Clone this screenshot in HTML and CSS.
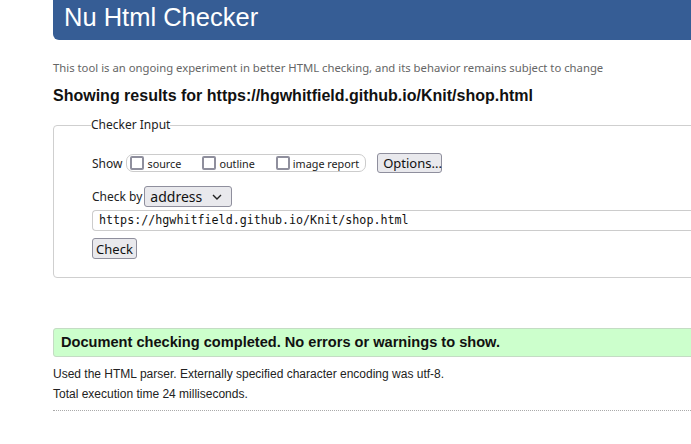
FILE: index.html
```html
<!DOCTYPE html>
<html lang="en">
<head>
<meta charset="utf-8">
<title>Nu Html Checker</title>
<link rel="stylesheet" href="styles.css">
</head>
<body>
<div class="page">
  <h1 class="banner">Nu Html Checker</h1>
  <p class="tagline">This tool is an ongoing experiment in better HTML checking, and its behavior remains subject to change</p>
  <h2 class="results-title">Showing results for https://hgwhitfield.github.io/Knit/shop.html</h2>
  <form class="checker">
    <fieldset class="checker-set">
      <legend class="checker-legend">Checker Input</legend>
      <div class="row show-row">
        <span class="label">Show</span>
        <span class="show-group">
          <label class="opt"><input type="checkbox" class="cb"><span>source</span></label>
          <label class="opt"><input type="checkbox" class="cb"><span>outline</span></label>
          <label class="opt"><input type="checkbox" class="cb"><span>image report</span></label>
        </span>
        <button type="button" class="btn options-btn">Options...</button>
      </div>
      <div class="row checkby-row">
        <span class="label">Check by</span>
        <span class="select">address<svg class="chev" width="10" height="6" viewBox="0 0 10 6"><path d="M1 1 L5 5 L9 1" fill="none" stroke="#222" stroke-width="1.4"/></svg></span>
      </div>
      <div class="url-input">https://hgwhitfield.github.io/Knit/shop.html</div>
      <div class="row">
        <button type="button" class="btn check-btn">Check</button>
      </div>
    </fieldset>
  </form>
  <div class="success">Document checking completed. No errors or warnings to show.</div>
  <p class="info">Used the HTML parser. Externally specified character encoding was utf-8.</p>
  <p class="info">Total execution time 24 milliseconds.</p>
  <hr class="dotted">
</div>
</body>
</html>
```
FILE: styles.css
```css
html, body {
  margin: 0;
  padding: 0;
  background: #fff;
  overflow: hidden;
}
body {
  font-family: "Liberation Sans", Arial, sans-serif;
  color: #222;
}
.page {
  margin-left: 53px;
  width: 760px;
  display: flex;
  flex-direction: column;
}
.banner {
  margin: 0;
  height: 40px;
  background: #365d95;
  color: #fff;
  font-family: "Liberation Sans", Arial, sans-serif;
  font-weight: normal;
  font-size: 25.5px;
  line-height: 34px;
  padding-left: 11px;
  border-radius: 0 0 0 6px;
}
.tagline {
  margin: 20px 0 0;
  font-family: "Noto Sans", sans-serif;
  font-size: 11.3px;
  line-height: 16px;
  color: #666;
}
.results-title {
  margin: 11px 0 0;
  font-size: 16px;
  line-height: 18px;
  font-weight: bold;
  color: #111;
}
.checker {
  margin: 12px 0 0;
}
.checker-set {
  margin: 0;
  padding: 20px 0 18px 38px;
  border: 1px solid #cfcfcf;
  border-radius: 4px;
  font-family: "Noto Sans", sans-serif;
  font-size: 12px;
  color: #222;
}
.checker-legend {
  padding: 0;
  margin-left: -1px;
  line-height: 16px;
}
.row {
  display: flex;
  align-items: center;
}
.show-row {
  height: 20px;
}
.label {
  margin-right: 1px;
}
.show-group {
  display: flex;
  align-items: center;
  height: 16px;
  margin-left: 3px;
  border: 1px solid #ccc;
  border-radius: 7px;
  padding: 0 6px 0 3px;
  gap: 21px;
  font-size: 10.8px;
}
.opt {
  display: flex;
  align-items: center;
  gap: 3px;
}
.cb {
  appearance: none;
  -webkit-appearance: none;
  margin: 0;
  width: 14px;
  height: 14px;
  border: 2px solid #8f8f9d;
  border-radius: 2px;
  background: #fff;
  box-sizing: border-box;
}
.btn {
  font-family: "Noto Sans", sans-serif;
  font-size: 13px;
  color: #111;
  background: #e9e9ed;
  border: 1px solid #8f8f9d;
  border-radius: 3px;
  padding: 0 5px;
  height: 20px;
  line-height: 18px;
}
.options-btn {
  margin-left: 11px;
  width: 65px;
}
.checkby-row {
  margin-top: 13px;
}
.select {
  display: flex;
  align-items: center;
  justify-content: space-between;
  box-sizing: border-box;
  width: 88px;
  height: 21px;
  margin-left: 1px;
  padding: 0 9px 0 5px;
  border: 1px solid #8f8f9d;
  border-radius: 3px;
  background: #e9e9ed;
  font-size: 14px;
  color: #111;
}
.url-input {
  margin-top: 3px;
  height: 21px;
  box-sizing: border-box;
  border: 1px solid #ccc;
  border-right: none;
  border-radius: 4px 0 0 4px;
  padding-left: 6px;
  font-family: "DejaVu Sans Mono", monospace;
  font-size: 11.7px;
  line-height: 19px;
  color: #111;
}
.check-btn {
  margin-top: 7px;
  width: 45px;
  height: 21px;
  padding: 0;
}
.success {
  margin-top: 50px;
  height: 29px;
  box-sizing: border-box;
  background: #ccffcc;
  border: 1px solid #c4dcc4;
  border-radius: 3px;
  padding-left: 7px;
  font-weight: bold;
  font-size: 14.6px;
  line-height: 27px;
  color: #111;
}
.info {
  margin: 0;
  font-size: 12px;
  line-height: 20px;
  color: #222;
}
.success + .info {
  margin-top: 7px;
}
.dotted {
  margin: 6px 0 0;
  border: none;
  border-top: 1px dotted #aaa;
  height: 0;
}
```
